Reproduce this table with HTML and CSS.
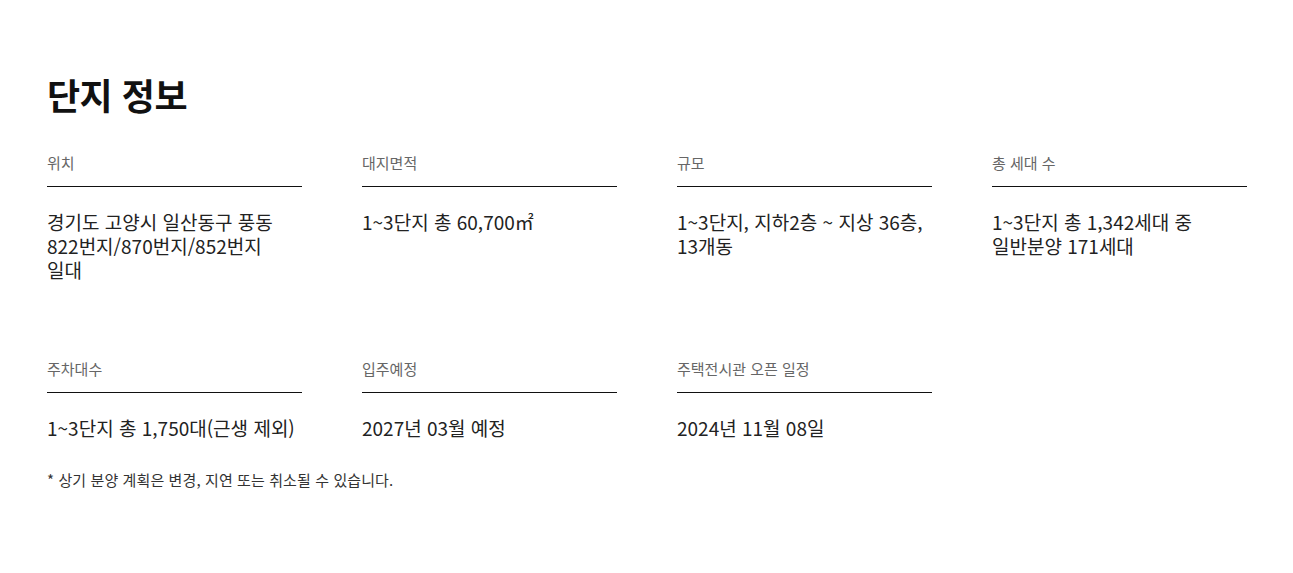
FILE: index.html
```html
<!DOCTYPE html>
<html lang="ko">
<head>
<meta charset="utf-8">
<link rel="stylesheet" href="styles.css">
</head>
<body>
<section class="info">
  <h2 class="title">단지 정보</h2>
  <div class="grid">
    <div class="cell">
      <div class="label">위치</div>
      <div class="value">경기도 고양시 일산동구 풍동<br>822번지/870번지/852번지<br>일대</div>
    </div>
    <div class="cell">
      <div class="label">대지면적</div>
      <div class="value">1~3단지 총 60,700㎡</div>
    </div>
    <div class="cell">
      <div class="label">규모</div>
      <div class="value">1~3단지, 지하2층 ~ 지상 36층,<br>13개동</div>
    </div>
    <div class="cell">
      <div class="label">총 세대 수</div>
      <div class="value">1~3단지 총 1,342세대 중<br>일반분양 171세대</div>
    </div>
    <div class="cell">
      <div class="label">주차대수</div>
      <div class="value">1~3단지 총 1,750대(근생 제외)</div>
    </div>
    <div class="cell">
      <div class="label">입주예정</div>
      <div class="value">2027년 03월 예정</div>
    </div>
    <div class="cell">
      <div class="label">주택전시관 오픈 일정</div>
      <div class="value">2024년 11월 08일</div>
    </div>
  </div>
  <p class="note">* 상기 분양 계획은 변경, 지연 또는 취소될 수 있습니다.</p>
</section>
</body>
</html>
```
FILE: styles.css
```css
html, body {
  margin: 0;
  padding: 0;
  background: #fff;
}
body {
  font-family: "Noto Sans CJK KR", "Noto Sans", sans-serif;
  color: #222;
}
.info {
  padding: 70px 47px 0 47px;
}
.title {
  margin: 0;
  font-size: 36px;
  font-weight: 700;
  line-height: 48px;
  color: #111;
  letter-spacing: -0.5px;
}
.grid {
  margin-top: 35px;
  display: grid;
  grid-template-columns: repeat(4, 255px);
  column-gap: 60px;
  row-gap: 77px;
}
.label {
  font-size: 15px;
  line-height: 20px;
  color: #666;
  padding-bottom: 13px;
  border-bottom: 1px solid #111;
}
.value {
  margin-top: 23px;
  font-size: 19px;
  line-height: 24px;
  color: #222;
}
.note {
  margin: 30px 0 0;
  font-size: 15px;
  line-height: 20px;
  color: #333;
  letter-spacing: 0.1px;
}
```
